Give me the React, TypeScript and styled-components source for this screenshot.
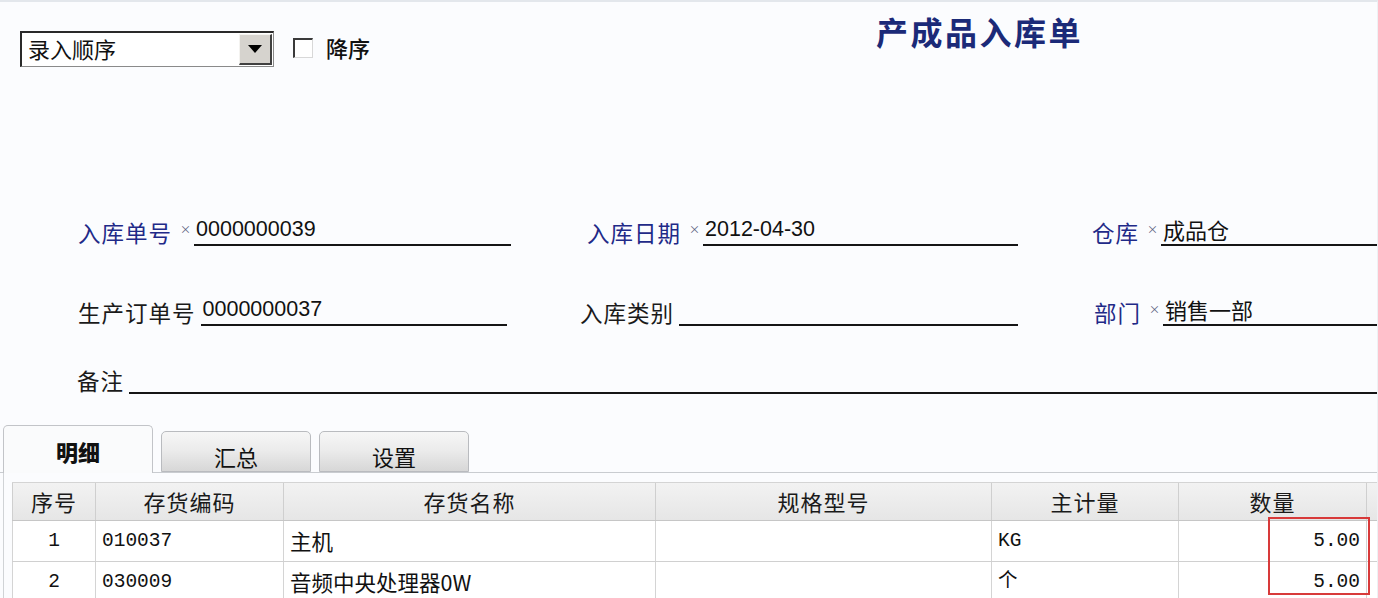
import React from 'react';
import styled, { createGlobalStyle } from 'styled-components';

const GlobalStyle = createGlobalStyle`
  html, body {
    margin: 0;
    padding: 0;
    height: 598px;
    overflow: hidden;
    background: #fbfcfe;
  }
  body {
    font-family: "Noto Sans CJK SC", "Liberation Sans", sans-serif;
    color: #1a1a1a;
  }
`;

const Page = styled.div`
  width: 1378px;
  height: 598px;
  box-sizing: border-box;
  border-top: 2px solid #e3e7ec;
  border-right: 1px solid #eef1f4;
  display: flex;
  flex-direction: column;
  overflow: hidden;
  & > * {
    flex-shrink: 0;
  }
`;

const TopBar = styled.div`
  display: flex;
  align-items: flex-start;
  padding: 13px 0 0 20px;
  height: 150px;
  box-sizing: border-box;
`;

const Select = styled.div`
  width: 254px;
  height: 36px;
  box-sizing: border-box;
  margin-top: 16px;
  border-top: 2px solid #2a2a2a;
  border-left: 2px solid #2a2a2a;
  border-bottom: 1px solid #8a8a8a;
  border-right: 1px solid #8a8a8a;
  background: #fff;
  display: flex;
  align-items: stretch;
`;

const SelectText = styled.div`
  flex: 1;
  font-size: 22px;
  line-height: 31px;
  padding-left: 6px;
  color: #111;
`;

const DropButton = styled.div`
  width: 30px;
  margin: 1px;
  background: #d6d3ce;
  border-top: 1px solid #f4f3f0;
  border-left: 1px solid #f4f3f0;
  border-right: 2px solid #404040;
  border-bottom: 2px solid #404040;
  display: flex;
  align-items: center;
  justify-content: center;
`;

const Triangle = styled.div`
  width: 0;
  height: 0;
  border-left: 7px solid transparent;
  border-right: 7px solid transparent;
  border-top: 8px solid #000;
`;

const CheckBox = styled.div`
  width: 20px;
  height: 20px;
  box-sizing: border-box;
  margin: 23px 0 0 19px;
  border-top: 2px solid #3a3a3a;
  border-left: 2px solid #3a3a3a;
  border-right: 1px solid #d8d8d8;
  border-bottom: 1px solid #d8d8d8;
  background: #fff;
`;

const CheckLabel = styled.div`
  margin: 17px 0 0 13px;
  font-size: 22px;
  line-height: 30px;
  font-weight: 500;
  color: #111;
`;

const Title = styled.h1`
  margin: -4px 0 0 506px;
  font-size: 32px;
  line-height: 40px;
  font-weight: 700;
  letter-spacing: 2.5px;
  color: #1b2a78;
`;

const FormArea = styled.div`
  display: flex;
  flex-direction: column;
  padding-top: 63px;
`;

const FormRow = styled.div<{ $height: number; $top?: number }>`
  display: grid;
  grid-template-columns: 78px 433px 69px 438px 74px 286px;
  height: ${p => p.$height}px;
  margin-top: ${p => p.$top ?? 0}px;
  align-items: end;
`;

const WideRow = styled.div`
  display: flex;
  align-items: flex-end;
  padding-left: 77px;
  height: 28px;
  margin-top: 40px;
`;

const Field = styled.div<{ $col: number; $shift?: number; $trim?: number }>`
  grid-column: ${p => p.$col} / span 1;
  display: flex;
  align-items: flex-end;
  margin-left: ${p => p.$shift ?? 0}px;
  margin-right: ${p => p.$trim ?? 0}px;
`;

const Label = styled.span<{ $required?: boolean }>`
  font-size: 22.5px;
  line-height: 28px;
  letter-spacing: 1px;
  color: ${p => (p.$required ? '#1f2a88' : '#1a1a1a')};
  white-space: nowrap;
`;

const Star = styled.span`
  font-size: 11px;
  line-height: 28px;
  color: #5a6080;
  padding: 0 3px 0 8px;
  align-self: flex-start;
`;

const Line = styled.div<{ $gap?: number }>`
  flex: 1;
  margin-left: ${p => p.$gap ?? 0}px;
  border-bottom: 2px solid #151515;
  font-family: "Liberation Sans", "Noto Sans CJK SC", sans-serif;
  font-size: 21.5px;
  line-height: 28px;
  padding: 0 0 1px 2px;
  color: #111;
  white-space: nowrap;
  height: 28px;
`;

const CjkValue = styled.span`
  font-family: "Noto Sans CJK SC", sans-serif;
  font-size: 22px;
`;

const TabBar = styled.div`
  display: flex;
  align-items: flex-end;
  gap: 8px;
  margin-top: 31px;
  padding-left: 3px;
  height: 47px;
  border-bottom: 1px solid #c9ccd0;
`;

const Tab = styled.div<{ $active?: boolean }>`
  width: 150px;
  box-sizing: border-box;
  height: ${p => (p.$active ? 48 : 41)}px;
  margin-bottom: ${p => (p.$active ? -1 : 0)}px;
  border: 1px solid ${p => (p.$active ? '#c2c4c8' : '#b9bbbf')};
  border-bottom: ${p => (p.$active ? 'none' : '1px solid #b9bbbf')};
  border-radius: 5px 5px 0 0;
  background: ${p =>
    p.$active ? '#fafbfc' : 'linear-gradient(#f6f6f6 0%, #ececec 45%, #d7d7d7 100%)'};
  display: flex;
  justify-content: center;
  align-items: ${p => (p.$active ? 'flex-start' : 'flex-end')};
  padding-top: ${p => (p.$active ? 10 : 0)}px;
  font-size: 22px;
  line-height: 30px;
  font-weight: ${p => (p.$active ? 900 : 400)};
  color: #111;
`;

const Panel = styled.div`
  flex: 1;
  margin-left: 3px;
  border-left: 1px solid #d0d3d6;
  padding: 9px 0 0 8px;
`;

const Table = styled.div`
  position: relative;
`;

const cols = '83px 188px 372px 336px 187px 188px 12px';

const HeaderRow = styled.div`
  display: grid;
  grid-template-columns: ${cols};
  height: 37px;
  background: linear-gradient(#f2f2f2, #e6e6e6);
  border-top: 1px solid #d4d4d4;
  border-bottom: 1px solid #c6c6c6;
`;

const HeadCell = styled.div`
  border-left: 1px solid #cfcfcf;
  text-align: center;
  font-size: 22px;
  line-height: 36px;
  color: #1a1a1a;
  letter-spacing: 1px;
`;

const DataRow = styled.div`
  display: grid;
  grid-template-columns: ${cols};
  height: 40px;
  background: #fff;
  border-bottom: 1px solid #d0d0d0;
`;

const Cell = styled.div<{ $align?: 'left' | 'center' | 'right'; $cjk?: boolean }>`
  border-left: 1px solid #d4d4d4;
  text-align: ${p => p.$align ?? 'left'};
  padding: 0 6px;
  font-family: ${p =>
    p.$cjk ? '"Noto Sans CJK SC", monospace' : '"Liberation Mono", "Noto Sans CJK SC", monospace'};
  font-size: ${p => (p.$cjk ? 21.5 : 19.5)}px;
  line-height: 40px;
  color: #111;
  white-space: nowrap;
  overflow: hidden;
`;

const Highlight = styled.div`
  position: absolute;
  left: 1256px;
  top: 35px;
  width: 102px;
  height: 78px;
  box-sizing: border-box;
  border: 2px solid #d83a3a;
  pointer-events: none;
`;

const rows = [
  { no: '1', code: '010037', name: '主机', spec: '', unit: 'KG', qty: '5.00' },
  { no: '2', code: '030009', name: '音频中央处理器0W', spec: '', unit: '个', qty: '5.00' },
];

const headers = ['序号', '存货编码', '存货名称', '规格型号', '主计量', '数量', ''];

export default function App() {
  return (
    <>
      <GlobalStyle />
      <Page>
        <TopBar>
          <Select>
            <SelectText>录入顺序</SelectText>
            <DropButton>
              <Triangle />
            </DropButton>
          </Select>
          <CheckBox />
          <CheckLabel>降序</CheckLabel>
          <Title>产成品入库单</Title>
        </TopBar>

        <FormArea>
          <FormRow $height={29}>
            <Field $col={2}>
              <Label $required>入库单号</Label>
              <Star>×</Star>
              <Line>0000000039</Line>
            </Field>
            <Field $col={4} $shift={7}>
              <Label $required>入库日期</Label>
              <Star>×</Star>
              <Line>2012-04-30</Line>
            </Field>
            <Field $col={6}>
              <Label $required>仓库</Label>
              <Star>×</Star>
              <Line><CjkValue>成品仓</CjkValue></Line>
            </Field>
          </FormRow>
          <FormRow $height={33} $top={49}>
            <Field $col={2} $trim={4}>
              <Label>生产订单号</Label>
              <Line $gap={5}>0000000037</Line>
            </Field>
            <Field $col={4}>
              <Label>入库类别</Label>
              <Line $gap={5} />
            </Field>
            <Field $col={6} $shift={2}>
              <Label $required>部门</Label>
              <Star>×</Star>
              <Line><CjkValue>销售一部</CjkValue></Line>
            </Field>
          </FormRow>
          <WideRow>
            <Label>备注</Label>
            <Line $gap={5} />
          </WideRow>
        </FormArea>

        <TabBar>
          <Tab $active>明细</Tab>
          <Tab>汇总</Tab>
          <Tab>设置</Tab>
        </TabBar>

        <Panel>
          <Table>
            <HeaderRow>
              {headers.map((h, i) => (
                <HeadCell key={i}>{h}</HeadCell>
              ))}
            </HeaderRow>
            {rows.map(r => (
              <DataRow key={r.no}>
                <Cell $align="center">{r.no}</Cell>
                <Cell>{r.code}</Cell>
                <Cell $cjk>{r.name}</Cell>
                <Cell>{r.spec}</Cell>
                <Cell>{r.unit}</Cell>
                <Cell $align="right">{r.qty}</Cell>
                <Cell />
              </DataRow>
            ))}
            <Highlight />
          </Table>
        </Panel>
      </Page>
    </>
  );
}
